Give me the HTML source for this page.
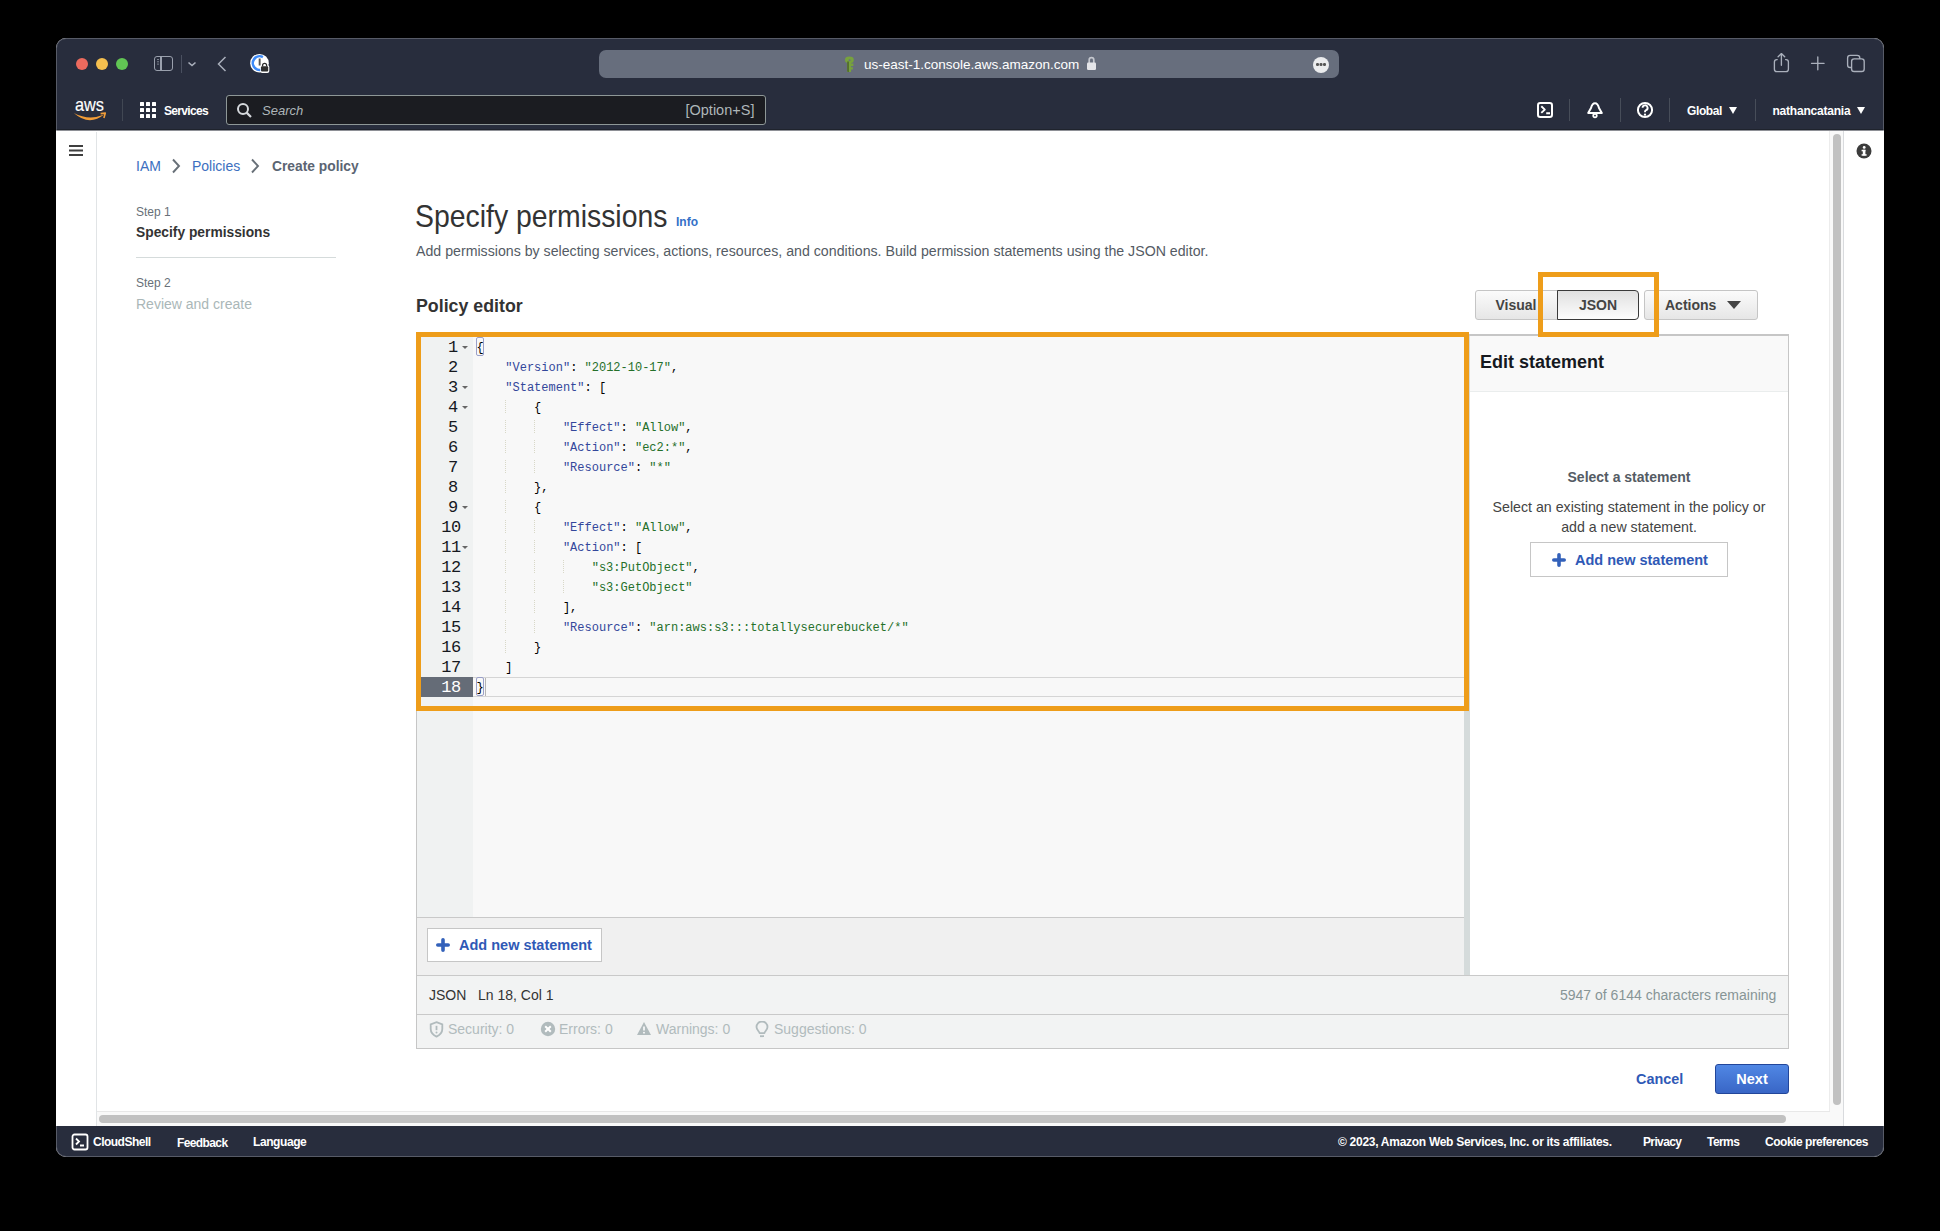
<!DOCTYPE html>
<html><head><meta charset="utf-8">
<style>
*{box-sizing:border-box;margin:0;padding:0}
html,body{width:1940px;height:1231px;overflow:hidden;background:#000;font-family:"Liberation Sans",sans-serif}
.a{position:absolute;white-space:nowrap}
#win{position:absolute;left:56px;top:38px;width:1828px;height:1119px;border-radius:10px;overflow:hidden;background:#fff}
#in{position:absolute;left:-56px;top:-38px;width:1940px;height:1231px}
.dot{position:absolute;width:12px;height:12px;border-radius:50%}
.nav{color:#fff;font-weight:bold;font-size:12px}
.vd{position:absolute;width:1px;background:#545b64}
.code{position:absolute;left:476.5px;font-family:"Liberation Mono",monospace;font-size:12px;line-height:20px;color:#000;white-space:pre}
.k{color:#33479b}.s{color:#25702a}
.ln{position:absolute;left:417px;font-family:"Liberation Mono",monospace;font-size:17px;line-height:20px;letter-spacing:-0.6px;color:#16191f;text-align:right}
.fold{position:absolute;left:462px;width:0;height:0;border-left:3px solid transparent;border-right:3px solid transparent;border-top:3px solid #666}
.ig{position:absolute;width:0;border-left:1px dotted #d8d8c8}
.btn{position:absolute;font-weight:bold;font-size:14px;color:#444;text-align:center;border:1px solid #c5c5c5;border-radius:3px;background:linear-gradient(#fbfbfb,#e6e6e6)}
.ftxt{color:#fff;font-weight:bold;font-size:12px}
.iss{position:absolute;top:1021px;font-size:14px;color:#b1bbbd}
</style></head><body>
<div id="win"><div id="in">
 <!-- top dark bar -->
 <div class="a" style="left:56px;top:38px;width:1828px;height:92px;background:#282d3d"></div>
 <div class="a" style="left:56px;top:129px;width:1828px;height:1px;background:#1f232d"></div>
 <div class="a" style="left:56px;top:130px;width:1828px;height:1px;background:#8e9096"></div>
 <div class="dot" style="left:76px;top:58px;background:#ec6a5e"></div>
 <div class="dot" style="left:96px;top:58px;background:#f4bf4f"></div>
 <div class="dot" style="left:116px;top:58px;background:#61c554"></div>
 <!-- sidebar toggle icon -->
 <div class="a" style="left:154px;top:56px;width:19px;height:15px;border:1.5px solid #9aa0ad;border-radius:3px"></div>
 <div class="a" style="left:160px;top:57px;width:1.5px;height:13px;background:#9aa0ad"></div>
 <div class="a" style="left:156.5px;top:59px;width:2px;height:1px;background:#7d8390;box-shadow:0 2.3px 0 #7d8390,0 4.6px 0 #7d8390"></div>
 <div class="vd" style="left:181px;top:55px;height:18px;background:#4a5060"></div>
 <svg class="a" style="left:186px;top:59px" width="12" height="10" viewBox="0 0 12 10"><path d="M2.5 3.5 L6 6.5 L9.5 3.5" fill="none" stroke="#a9afbb" stroke-width="1.6"/></svg>
 <svg class="a" style="left:214px;top:55px" width="16" height="18" viewBox="0 0 16 18"><path d="M11.5 2 L4.5 9 L11.5 16" fill="none" stroke="#a9afbb" stroke-width="1.5"/></svg>
 <!-- 1password -->
 <svg class="a" style="left:249px;top:53px" width="22" height="22" viewBox="0 0 22 22"><circle cx="10.5" cy="10.2" r="9.3" fill="#fff"/><path d="M13.9 4.1 A6.8 6.8 0 1 0 15.3 15" fill="none" stroke="#3d8af7" stroke-width="2.6"/><rect x="9.7" y="5.5" width="1.9" height="7" fill="#555"/><rect x="11.3" y="12" width="9" height="8" rx="2" fill="#fff"/><rect x="12" y="13.3" width="7.2" height="5.2" rx="1" fill="#2f2f2f"/><path d="M13.6 13.5 v-1.2 a2 2 0 0 1 4 0 v1.2" fill="none" stroke="#2f2f2f" stroke-width="1.3"/></svg>
 <!-- url bar -->
 <div class="a" style="left:599px;top:50px;width:740px;height:28px;border-radius:7px;background:#676e7d"></div>
 <svg class="a" style="left:843px;top:55px" width="12" height="18" viewBox="0 0 12 18"><ellipse cx="6.4" cy="4.9" rx="4.4" ry="3.3" fill="#77a23d"/><path d="M4.1 6 H8.1 V8.4 H10.4 V10.9 H8.1 V12.3 H9.9 V14.6 H8.1 V17 H4.1 Z" fill="#77a23d"/><path d="M4.1 6.5 H6 V17 H4.6 L4.1 16 Z" fill="#556f30"/><circle cx="6.6" cy="5.2" r="1" fill="#667080"/></svg>
 <div class="a" style="left:864px;top:56px;font-size:13.5px;line-height:18px;color:#fff">us-east-1.console.aws.amazon.com</div>
 <svg class="a" style="left:1086px;top:55px" width="12" height="16" viewBox="0 0 12 16"><path d="M3.2 8 V5 a2.3 2.3 0 0 1 4.6 0 V8" fill="none" stroke="#c4c7ce" stroke-width="1.7"/><rect x="1" y="7.6" width="9" height="7.4" rx="1.3" fill="#e4e5e9"/></svg>
 <div class="a" style="left:1312.5px;top:56.5px;width:16px;height:16px;border-radius:50%;background:#ebecee"></div>
 <div class="a" style="left:1316px;top:63px;width:2.5px;height:2.5px;border-radius:50%;background:#555;box-shadow:3.5px 0 0 #555,7px 0 0 #555"></div>
 <!-- toolbar right icons -->
 <svg class="a" style="left:1760px;top:45px" width="120" height="35" viewBox="1760 45 120 35"><g fill="none" stroke="#aab0bc" stroke-width="1.35" stroke-linecap="round" stroke-linejoin="round"><path d="M1777.2 59.6 H1776.8 a2.4 2.4 0 0 0 -2.4 2.4 V69.2 a2.4 2.4 0 0 0 2.4 2.4 H1786 a2.4 2.4 0 0 0 2.4 -2.4 V62 a2.4 2.4 0 0 0 -2.4 -2.4 H1785.6"/><path d="M1781.4 65.2 V53.8 M1778.1 56.8 L1781.4 53.6 L1784.7 56.8"/><path d="M1817.8 57 V69.7 M1811.5 63.3 H1824.1"/><rect x="1847.6" y="55.3" width="12.2" height="12.2" rx="2.6"/><rect x="1851.6" y="58.9" width="12.6" height="12.6" rx="2.6" fill="#282d3d"/></g></svg>
 <!-- AWS nav -->
 <svg class="a" style="left:72px;top:98px" width="36" height="24" viewBox="0 0 36 24"><text x="3" y="13" font-family="Liberation Sans" font-size="18.5" fill="#fff" stroke="#fff" stroke-width="0.15" textLength="29" lengthAdjust="spacingAndGlyphs">aws</text><path d="M1.8 15 Q17 23 32.2 16.6 Q17 28.5 1.8 15 Z" fill="#f29d38"/><path d="M28.6 15.6 L33.3 15.1 L31.9 20" fill="none" stroke="#f29d38" stroke-width="1.6" stroke-linejoin="round"/></svg>
 <div class="vd" style="left:122px;top:99px;height:22px;background:#414753"></div>
 <svg class="a" style="left:139px;top:101px" width="18" height="18" viewBox="0 0 18 18" fill="#fff"><rect x="1" y="1" width="4" height="4" rx=".6"/><rect x="7" y="1" width="4" height="4" rx=".6"/><rect x="13" y="1" width="4" height="4" rx=".6"/><rect x="1" y="7" width="4" height="4" rx=".6"/><rect x="7" y="7" width="4" height="4" rx=".6"/><rect x="13" y="7" width="4" height="4" rx=".6"/><rect x="1" y="13" width="4" height="4" rx=".6"/><rect x="7" y="13" width="4" height="4" rx=".6"/><rect x="13" y="13" width="4" height="4" rx=".6"/></svg>
 <div class="a nav" style="left:164px;top:103px;font-size:12px;line-height:16px;letter-spacing:-0.68px">Services</div>
 <div class="a" style="left:226px;top:95px;width:540px;height:30px;border:1px solid #8e9797;border-radius:3px;background:#1b1c21"></div>
 <svg class="a" style="left:236px;top:102px" width="17" height="17" viewBox="0 0 17 17"><circle cx="7" cy="7" r="5" fill="none" stroke="#d5d8dc" stroke-width="2"/><path d="M10.6 10.6 L15 15" stroke="#d5d8dc" stroke-width="2.2"/></svg>
 <div class="a" style="left:262px;top:102px;font-size:13px;font-style:italic;color:#aeb6b9;line-height:18px">Search</div>
 <div class="a" style="left:685.5px;top:101px;font-size:14.5px;color:#aeb6b9;line-height:18px">[Option+S]</div>
 <!-- nav right -->
 <svg class="a" style="left:1530px;top:95px" width="130" height="30" viewBox="1530 95 130 30"><g fill="none" stroke="#fff" stroke-width="2" stroke-linejoin="round"><rect x="1538" y="103" width="14" height="14" rx="2.2"/><path d="M1541.3 106.3 L1544.8 109.6 L1541.3 112.9 M1546.2 113.3 H1550" stroke-width="1.9"/><path d="M1595 103.2 C1592.6 103.2 1591.6 105.5 1591 108 L1588.2 113 H1601.8 L1599 108 C1598.4 105.5 1597.4 103.2 1595 103.2 Z"/><circle cx="1595" cy="115.6" r="1.8" stroke-width="1.7"/><circle cx="1645" cy="110" r="7.1"/><path d="M1642.6 107.8 a2.5 2.5 0 1 1 3.5 2.3 c-0.8 0.35 -1.1 0.8 -1.1 1.6 v0.6" stroke-width="1.9"/></g><circle cx="1645" cy="114.7" r="1.15" fill="#fff"/></svg>
 <div class="vd" style="left:1569px;top:99px;height:22px;background:#474d59"></div>
 <div class="vd" style="left:1620px;top:98px;height:24px;background:#474d59"></div>
 <div class="vd" style="left:1669px;top:98px;height:24px;background:#474d59"></div>
 <div class="a nav" style="left:1687px;top:103px;font-size:12px;line-height:16px;letter-spacing:-0.38px">Global</div>
 <div class="a" style="left:1729px;top:107px;border-left:4.5px solid transparent;border-right:4.5px solid transparent;border-top:7px solid #fff"></div>
 <div class="vd" style="left:1755px;top:99px;height:22px;background:#474d59"></div>
 <div class="a nav" style="left:1772.5px;top:103px;font-size:12px;line-height:16px;letter-spacing:-0.22px">nathancatania</div>
 <div class="a" style="left:1857px;top:107px;border-left:4.5px solid transparent;border-right:4.5px solid transparent;border-top:7px solid #fff"></div>
 <!-- sidebar -->
 <div class="a" style="left:96px;top:132px;width:1px;height:994px;background:#e1e4e6"></div>
 <div class="a" style="left:69px;top:145px;width:14px;height:2px;background:#3f3f3f;box-shadow:0 4.5px 0 #3f3f3f,0 9px 0 #3f3f3f"></div>
 <!-- right tools -->
 <div class="a" style="left:1829px;top:131px;width:15px;height:995px;background:#f9f9f9;border-right:1px solid #d9dbde"></div>
 <div class="a" style="left:1829px;top:131px;width:1px;height:980px;background:#ececec"></div>
 <div class="a" style="left:1833px;top:134px;width:8px;height:971px;border-radius:4px;background:#c1c1c1"></div>
 <svg class="a" style="left:1856px;top:143px" width="16" height="16" viewBox="0 0 16 16"><circle cx="8" cy="8" r="7.5" fill="#3c3c3c"/><rect x="6.8" y="6.8" width="2.6" height="5.6" fill="#fff"/><rect x="5.6" y="6.8" width="3.8" height="1.5" fill="#fff"/><rect x="5.6" y="11.2" width="5" height="1.5" fill="#fff"/><circle cx="8.2" cy="4.4" r="1.4" fill="#fff"/></svg>
 <!-- bottom scroll -->
 <div class="a" style="left:97px;top:1111px;width:1746px;height:15px;background:#f9f9f9"></div>
 <div class="a" style="left:97px;top:1111px;width:1733px;height:1px;background:#e8e8e8"></div>
 <div class="a" style="left:99px;top:1115px;width:1687px;height:8px;border-radius:4px;background:#c1c1c1"></div>

 <!-- breadcrumb -->
 <div class="a" style="left:136px;top:157px;font-size:14px;line-height:18px;color:#3c6fc0">IAM</div>
 <svg class="a" style="left:170px;top:157px" width="12" height="18" viewBox="0 0 12 18"><path d="M3 2.5 L9 9 L3 15.5" fill="none" stroke="#687078" stroke-width="1.9"/></svg>
 <div class="a" style="left:192px;top:157px;font-size:14px;line-height:18px;color:#3c6fc0">Policies</div>
 <svg class="a" style="left:249px;top:157px" width="12" height="18" viewBox="0 0 12 18"><path d="M3 2.5 L9 9 L3 15.5" fill="none" stroke="#687078" stroke-width="1.9"/></svg>
 <div class="a" style="left:272px;top:158px;font-size:14px;line-height:18px;color:#5b6573;font-weight:bold;font-size:13.8px">Create policy</div>

 <!-- steps -->
 <div class="a" style="left:136px;top:205px;font-size:12px;line-height:15px;color:#687078">Step 1</div>
 <div class="a" style="left:136px;top:224px;font-size:13.8px;line-height:17px;color:#333;font-weight:bold">Specify permissions</div>
 <div class="a" style="left:136px;top:257px;width:200px;height:1px;background:#d5dbdb"></div>
 <div class="a" style="left:136px;top:276px;font-size:12px;line-height:15px;color:#687078">Step 2</div>
 <div class="a" style="left:136px;top:296px;font-size:14px;line-height:17px;color:#aab7b8">Review and create</div>

 <!-- title -->
 <div class="a" style="left:415px;top:197.1px;font-size:28.4px;line-height:34px;color:#333;transform:scaleY(1.116);transform-origin:0 0">Specify permissions</div>
 <div class="a" style="left:676px;top:215px;font-size:12px;line-height:15px;color:#3370c8;font-weight:bold">Info</div>
 <div class="a" style="left:416px;top:243px;font-size:14.18px;line-height:17px;color:#545b64">Add permissions by selecting services, actions, resources, and conditions. Build permission statements using the JSON editor.</div>
 <div class="a" style="left:416px;top:296px;font-size:17.8px;line-height:21px;color:#333;font-weight:bold">Policy editor</div>

 <!-- toggle buttons -->
 <div class="btn" style="left:1475px;top:290px;width:84px;height:30px;line-height:28px;border-radius:3px 0 0 3px;text-indent:-2px">Visual</div>
 <div class="btn" style="left:1557px;top:290px;width:82px;height:30px;line-height:28px;border-radius:0 4px 4px 0;border:1px solid #3a3a3a;background:linear-gradient(#e0e0e0,#fdfdfd)">JSON</div>
 <div class="btn" style="left:1644px;top:290px;width:114px;height:30px;line-height:28px;text-align:left;padding-left:20px">Actions</div>
 <div class="a" style="left:1727px;top:301px;border-left:7px solid transparent;border-right:7px solid transparent;border-top:8px solid #444"></div>

 <!-- editor outer -->
 <div class="a" style="left:416px;top:334px;width:1373px;height:715px;border:1px solid #c6c6c6;background:#fff"></div>
 <div class="a" style="left:417px;top:335px;width:56px;height:582px;background:#f0f2f2"></div>
 <div class="a" style="left:473px;top:335px;width:991px;height:582px;background:#f8f8f8"></div>
 <div class="a" style="left:417px;top:917px;width:1047px;height:1px;background:#c9c9c9"></div>
 <div class="a" style="left:417px;top:918px;width:1047px;height:57px;background:#f0f0f0"></div>
 <div class="a" style="left:1464px;top:335px;width:6px;height:640px;background:#d5dbdb"></div>
 <!-- edit panel -->
 <div class="a" style="left:1469px;top:334px;width:320px;height:2px;background:#c6c6c6"></div>
 <div class="a" style="left:1470px;top:336px;width:318px;height:56px;background:#f9f9f9;border-bottom:1px solid #eaeded"></div>
 <div class="a" style="left:1480px;top:352px;font-size:18px;line-height:21px;color:#16191f;font-weight:bold">Edit statement</div>
 <div class="a" style="left:1470px;top:468.5px;width:318px;text-align:center;font-size:14px;line-height:17px;color:#545b64;font-weight:bold">Select a statement</div>
 <div class="a" style="left:1470px;top:497px;width:318px;text-align:center;font-size:14.2px;line-height:20px;color:#444;white-space:normal">Select an existing statement in the policy or<br>add a new statement.</div>
 <div class="a" style="left:1530px;top:542px;width:198px;height:35px;border:1px solid #c6c6c6;background:#fff"></div>
 <svg class="a" style="left:1552px;top:553px" width="14" height="14" viewBox="0 0 14 14"><path d="M7 1.8 V12.2 M1.8 7 H12.2" stroke="#3361ba" stroke-width="3.6" stroke-linecap="round"/></svg>
 <div class="a" style="left:1575px;top:552px;font-size:14.5px;line-height:17px;color:#2f59b6;font-weight:bold">Add new statement</div>
 <!-- bottom add button -->
 <div class="a" style="left:427px;top:928px;width:175px;height:34px;border:1px solid #c6c6c6;background:#fff"></div>
 <svg class="a" style="left:436px;top:938px" width="14" height="14" viewBox="0 0 14 14"><path d="M7 1.8 V12.2 M1.8 7 H12.2" stroke="#3361ba" stroke-width="3.6" stroke-linecap="round"/></svg>
 <div class="a" style="left:459px;top:937px;font-size:14.5px;line-height:17px;color:#2f59b6;font-weight:bold">Add new statement</div>
 <!-- status bar -->
 <div class="a" style="left:417px;top:975px;width:1371px;height:1px;background:#c9c9c9"></div>
 <div class="a" style="left:417px;top:976px;width:1371px;height:38px;background:#f2f3f3"></div>
 <div class="a" style="left:429px;top:987px;font-size:14px;line-height:17px;color:#333">JSON</div>
 <div class="a" style="left:478px;top:987px;font-size:14px;line-height:17px;color:#333">Ln 18, Col 1</div>
 <div class="a" style="left:1560px;top:987px;font-size:14px;line-height:17px;color:#879596">5947 of 6144 characters remaining</div>
 <div class="a" style="left:417px;top:1014px;width:1371px;height:1px;background:#c9c9c9"></div>
 <div class="a" style="left:417px;top:1015px;width:1371px;height:33px;background:#f2f3f3"></div>
 <svg class="a" style="left:429px;top:1021px" width="15" height="17" viewBox="0 0 15 17"><path d="M7.5 1.2 L13.3 3.3 V8 C13.3 11.5 10.8 14 7.5 15.6 C4.2 14 1.7 11.5 1.7 8 V3.3 Z" fill="none" stroke="#b1bbbd" stroke-width="1.8"/><path d="M7.5 4.8 V9.2" stroke="#b1bbbd" stroke-width="1.8"/><circle cx="7.5" cy="11.4" r="1" fill="#b1bbbd"/></svg>
 <div class="iss" style="left:448px">Security: 0</div>
 <svg class="a" style="left:540px;top:1021px" width="16" height="16" viewBox="0 0 16 16"><circle cx="8" cy="8" r="7.2" fill="#b1bbbd"/><path d="M5.2 5.2 L10.8 10.8 M10.8 5.2 L5.2 10.8" stroke="#fff" stroke-width="2"/></svg>
 <div class="iss" style="left:559px">Errors: 0</div>
 <svg class="a" style="left:636px;top:1021px" width="16" height="15" viewBox="0 0 16 15"><path d="M8 1 L15 14 H1 Z" fill="#b1bbbd"/><path d="M8 5.5 V9.5" stroke="#fff" stroke-width="1.6"/><circle cx="8" cy="11.7" r=".9" fill="#fff"/></svg>
 <div class="iss" style="left:656px">Warnings: 0</div>
 <svg class="a" style="left:755px;top:1021px" width="14" height="18" viewBox="0 0 14 18"><path d="M4.6 12.2 C4.4 10.4 1.5 9 1.5 6 a5.5 5.5 0 0 1 11 0 c0 3 -2.9 4.4 -3.1 6.2 Z" fill="none" stroke="#b1bbbd" stroke-width="1.8" stroke-linejoin="round"/><path d="M5 15.2 H9" stroke="#b1bbbd" stroke-width="1.8"/></svg>
 <div class="iss" style="left:774px">Suggestions: 0</div>

 <!-- cancel/next -->
 <div class="a" style="left:1636px;top:1071px;font-size:14.4px;line-height:17px;color:#2f59b6;font-weight:bold">Cancel</div>
 <div class="a" style="left:1715px;top:1064px;width:74px;height:30px;border-radius:3px;border:1px solid #22469a;background:linear-gradient(#5087e4,#3966c6);color:#fff;font-weight:bold;font-size:14.5px;line-height:28px;text-align:center">Next</div>

 <!-- footer -->
 <div class="a" style="left:56px;top:1126px;width:1828px;height:31px;background:#282d3d"></div>
 <svg class="a" style="left:71px;top:1133px" width="18" height="18" viewBox="0 0 18 18"><rect x="1.5" y="1.5" width="15" height="15" rx="2" fill="none" stroke="#fff" stroke-width="1.8"/><path d="M5 5.5 L8 8.5 L5 11.5 M9 12.5 H13" fill="none" stroke="#fff" stroke-width="1.8"/></svg>
 <div class="a ftxt" style="left:93px;top:1135px;line-height:15px;letter-spacing:-0.51px">CloudShell</div>
 <div class="a ftxt" style="left:177px;top:1136px;line-height:15px;letter-spacing:-0.61px">Feedback</div>
 <div class="a ftxt" style="left:253px;top:1135px;line-height:15px;letter-spacing:-0.42px">Language</div>
 <div class="a ftxt" style="left:1338px;top:1135px;line-height:15px;letter-spacing:-0.28px">© 2023, Amazon Web Services, Inc. or its affiliates.</div>
 <div class="a ftxt" style="left:1643px;top:1135px;line-height:15px;letter-spacing:-0.63px">Privacy</div>
 <div class="a ftxt" style="left:1707px;top:1135px;line-height:15px;letter-spacing:-0.56px">Terms</div>
 <div class="a ftxt" style="left:1765px;top:1135px;line-height:15px;letter-spacing:-0.47px">Cookie preferences</div>
<!--CODE-->
 <div class="ln" style="top:338px;width:40.5px">1</div>
 <div class="fold" style="top:346px"></div>
 <div class="code" style="top:338px">{</div>
 <div class="ln" style="top:358px;width:40.5px">2</div>
 <div class="code" style="top:358px">    <span class="k">&quot;Version&quot;</span>: <span class="s">&quot;2012-10-17&quot;</span>,</div>
 <div class="ln" style="top:378px;width:40.5px">3</div>
 <div class="fold" style="top:386px"></div>
 <div class="code" style="top:378px">    <span class="k">&quot;Statement&quot;</span>: [</div>
 <div class="ln" style="top:398px;width:40.5px">4</div>
 <div class="fold" style="top:406px"></div>
 <div class="ig" style="left:505.3px;top:400px;height:13px"></div>
 <div class="code" style="top:398px">        {</div>
 <div class="ln" style="top:418px;width:40.5px">5</div>
 <div class="ig" style="left:505.3px;top:420px;height:13px"></div>
 <div class="ig" style="left:534.1px;top:420px;height:13px"></div>
 <div class="code" style="top:418px">            <span class="k">&quot;Effect&quot;</span>: <span class="s">&quot;Allow&quot;</span>,</div>
 <div class="ln" style="top:438px;width:40.5px">6</div>
 <div class="ig" style="left:505.3px;top:440px;height:13px"></div>
 <div class="ig" style="left:534.1px;top:440px;height:13px"></div>
 <div class="code" style="top:438px">            <span class="k">&quot;Action&quot;</span>: <span class="s">&quot;ec2:*&quot;</span>,</div>
 <div class="ln" style="top:458px;width:40.5px">7</div>
 <div class="ig" style="left:505.3px;top:460px;height:13px"></div>
 <div class="ig" style="left:534.1px;top:460px;height:13px"></div>
 <div class="code" style="top:458px">            <span class="k">&quot;Resource&quot;</span>: <span class="s">&quot;*&quot;</span></div>
 <div class="ln" style="top:478px;width:40.5px">8</div>
 <div class="ig" style="left:505.3px;top:480px;height:13px"></div>
 <div class="code" style="top:478px">        },</div>
 <div class="ln" style="top:498px;width:40.5px">9</div>
 <div class="fold" style="top:506px"></div>
 <div class="ig" style="left:505.3px;top:500px;height:13px"></div>
 <div class="code" style="top:498px">        {</div>
 <div class="ln" style="top:518px;width:43.5px">10</div>
 <div class="ig" style="left:505.3px;top:520px;height:13px"></div>
 <div class="ig" style="left:534.1px;top:520px;height:13px"></div>
 <div class="code" style="top:518px">            <span class="k">&quot;Effect&quot;</span>: <span class="s">&quot;Allow&quot;</span>,</div>
 <div class="ln" style="top:538px;width:43.5px">11</div>
 <div class="fold" style="top:546px"></div>
 <div class="ig" style="left:505.3px;top:540px;height:13px"></div>
 <div class="ig" style="left:534.1px;top:540px;height:13px"></div>
 <div class="code" style="top:538px">            <span class="k">&quot;Action&quot;</span>: [</div>
 <div class="ln" style="top:558px;width:43.5px">12</div>
 <div class="ig" style="left:505.3px;top:560px;height:13px"></div>
 <div class="ig" style="left:534.1px;top:560px;height:13px"></div>
 <div class="ig" style="left:562.9px;top:560px;height:13px"></div>
 <div class="code" style="top:558px">                <span class="s">&quot;s3:PutObject&quot;</span>,</div>
 <div class="ln" style="top:578px;width:43.5px">13</div>
 <div class="ig" style="left:505.3px;top:580px;height:13px"></div>
 <div class="ig" style="left:534.1px;top:580px;height:13px"></div>
 <div class="ig" style="left:562.9px;top:580px;height:13px"></div>
 <div class="code" style="top:578px">                <span class="s">&quot;s3:GetObject&quot;</span></div>
 <div class="ln" style="top:598px;width:43.5px">14</div>
 <div class="ig" style="left:505.3px;top:600px;height:13px"></div>
 <div class="ig" style="left:534.1px;top:600px;height:13px"></div>
 <div class="code" style="top:598px">            ],</div>
 <div class="ln" style="top:618px;width:43.5px">15</div>
 <div class="ig" style="left:505.3px;top:620px;height:13px"></div>
 <div class="ig" style="left:534.1px;top:620px;height:13px"></div>
 <div class="code" style="top:618px">            <span class="k">&quot;Resource&quot;</span>: <span class="s">&quot;arn:aws:s3:::totallysecurebucket/*&quot;</span></div>
 <div class="ln" style="top:638px;width:43.5px">16</div>
 <div class="ig" style="left:505.3px;top:640px;height:13px"></div>
 <div class="code" style="top:638px">        }</div>
 <div class="ln" style="top:658px;width:43.5px">17</div>
 <div class="code" style="top:658px">    ]</div>
 <div class="a" style="left:417px;top:677px;width:56px;height:20px;background:#656c77"></div>
 <div class="a" style="left:473px;top:677px;width:991px;height:20px;border-top:1px solid #d5d5d5;border-bottom:1px solid #d5d5d5"></div>
 <div class="ln" style="top:678px;color:#fff;width:43.5px">18</div>
 <div class="code" style="top:678px">}</div>
 <div class="a" style="left:476px;top:337px;width:8px;height:19px;border:1px solid #9aa0c8;border-radius:2px"></div>
 <div class="a" style="left:476px;top:677px;width:8px;height:19px;border:1px solid #9aa0c8;border-radius:2px"></div>
 <div class="a" style="left:484.5px;top:678px;width:1.5px;height:18px;background:#b5b5b5"></div>
 <div class="a" style="left:416px;top:332px;width:1053px;height:379px;border:5px solid #ee9d1a"></div>
 <div class="a" style="left:1538px;top:272px;width:121px;height:65px;border:5px solid #ee9d1a"></div>
<!--/CODE-->

</div></div>
<div style="position:absolute;left:56px;top:38px;width:1828px;height:1119px;border-radius:10px;border:1px solid rgba(255,255,255,0.22);pointer-events:none"></div>
</body></html>
